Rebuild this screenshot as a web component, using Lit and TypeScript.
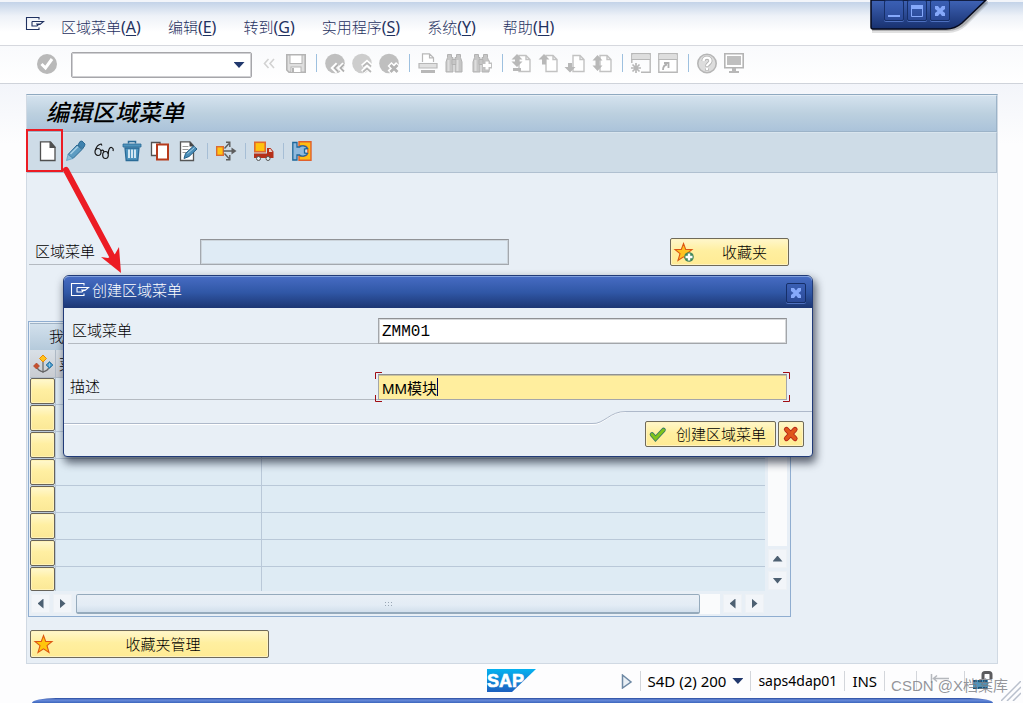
import { LitElement, html, css, svg, nothing, TemplateResult, SVGTemplateResult } from "lit";
import { customElement, property } from "lit/decorators.js";

const page = (x: number) => svg`<path d="M${x} 2.5h7l4 4v12h-11z M${x + 7} 2.5v4h4" />`;
const star = (fill: string, stroke: string) =>
  svg`<path d="M9.500 1.500l2.200 6h6.300l-5 4.200 2 6.800-5.500-3.700L4 18.500l2-6.800L1 7.500h6.300z" fill=${fill} stroke=${stroke} stroke-width="1.100" />`;

const ICONS: Record<string, SVGTemplateResult> = {
  exit: svg`<path d="M13 3.500V1.500H.500v12H13v-2M6 5.500h11.500L14 8.500h-3M6 5.500v4.500h5l2-2H10" fill="none" stroke="currentColor" stroke-width="1.100"/>`,
  check: svg`<circle cx="10" cy="11" r="10" fill="#b9b9b9"/><path d="M4.500 11l4 4 6.500-9" fill="none" stroke="#fff" stroke-width="3"/>`,
  collapse: svg`<path d="M9.500 6L5.500 10.500l4 4.500M15 6l-4 4.500 4 4.500" fill="none" stroke="#d2d2d2" stroke-width="1.600"/>`,
  save: svg`<path d="M.800 1.800h18.400v17.400H3L.800 17z" fill="#dedede" stroke="#b4b4b4" stroke-width="1.600"/><rect x="4" y="2" width="12" height="8.500" fill="#fff" stroke="#b4b4b4"/><rect x="5" y="14" width="10" height="5.500" fill="#fff" stroke="#b4b4b4"/><path d="M7 15v4" stroke="#b4b4b4" stroke-width="2"/>`,
  back: svg`<circle cx="10" cy="10.500" r="9.800" fill="#bfbfbf"/><path d="M12.500 11l-4 4 4 4M19 11l-4 4 4 4" fill="none" stroke="#fff" stroke-width="4.500"/><path d="M13 11.500l-3.500 3.500 3.500 3.500M19 11.500l-3.500 3.500 3.500 3.500" fill="none" stroke="#b0b0b0" stroke-width="1.800"/>`,
  up: svg`<circle cx="10" cy="10.500" r="9.800" fill="#cdcdcd"/><path d="M10.500 13.500l4.500-4 4.500 4M10.500 19l4.500-4 4.500 4" fill="none" stroke="#fff" stroke-width="4.500"/><path d="M11 13.500l4-3.500 4 3.500M11 19l4-3.500 4 3.500" fill="none" stroke="#b8b8b8" stroke-width="1.800"/>`,
  cancel: svg`<circle cx="10" cy="10.500" r="9.800" fill="#bfbfbf"/><path d="M10.500 11l8.500 8.500M19 11l-8.500 8.500" stroke="#fff" stroke-width="5.500"/><path d="M11.500 12l7 7M18.500 12l-7 7" stroke="#b4b4b4" stroke-width="2.800"/>`,
  print: svg`<path d="M4.500 9V.800h7l4 4V9M11.500.800v4h4" fill="#fff" stroke="#b8b8b8" stroke-width="1.200"/><path d="M1 10.500h18v4.500H1z" fill="#e0e0e0" stroke="#b8b8b8" stroke-width="1.200"/><path d="M3 17h14v3H3z" fill="#b8b8b8"/>`,
  find: svg`<g fill="#c6c6c6" stroke="#b2b2b2"><path d="M2.500 1.500h4v3h1.500v14.500h-7V9l1.500-4.500zM11.500 1.500h4v3L17 9v10h-7V4.500h1.500z"/><path d="M7 6.500h4v5H7z"/></g><path d="M3.500 7v11M12.500 7v11" stroke="#dedede" stroke-width="2"/>`,
  findNext: svg`<g fill="#c6c6c6" stroke="#b2b2b2"><path d="M2.500 1.500h4v3h1.500v14.500h-7V9l1.500-4.500zM11.500 1.500h4v3L17 9v10h-7V4.500h1.500z"/><path d="M7 6.500h4v5H7z"/></g><path d="M3.500 7v11" stroke="#dedede" stroke-width="2"/><path d="M15 7.500v10M10 12.500h10" stroke="#c0c0c0" stroke-width="6"/><path d="M15 8.500v8M11 12.500h8" stroke="#fff" stroke-width="3"/>`,
  firstPage: svg`<g fill="#fff" stroke="#c2c2c2" stroke-width="1.400">${page(8)}</g><path d="M6 1l5.500 5.500H8v2h3.500L6 14 .500 8.500H4v-2H.500z" fill="#b8b8b8"/><path d="M2 15h8v3H2z" fill="#b8b8b8"/>`,
  prevPage: svg`<g fill="#fff" stroke="#c2c2c2" stroke-width="1.400">${page(8)}</g><path d="M6 1l5.500 5.500H8v5H4v-5H.500z" fill="#b8b8b8"/>`,
  nextPage: svg`<g fill="#fff" stroke="#c2c2c2" stroke-width="1.400">${page(8)}</g><path d="M3 10h4v4h3.500L5 19.500-.500 14H3z" fill="#b8b8b8"/>`,
  lastPage: svg`<g fill="#fff" stroke="#c2c2c2" stroke-width="1.400">${page(8)}</g><path d="M5.500 2l5 5.500H7.500v5h3l-5 5.500-5-5.500h3v-5h-3z" fill="#b8b8b8"/>`,
  session: svg`<path d="M.800 10V.800h18.400v18.400H10" fill="none" stroke="#b8b8b8" stroke-width="1.400"/><path d="M1.500 1.500h17V6h-17z" fill="#dedede"/><path d="M0 6.500h19" stroke="#b8b8b8"/><path d="M5 10v10M0 15h10M1.500 11.500l7 7M8.500 11.500l-7 7" stroke="#b8b8b8" stroke-width="1.700"/>`,
  shortcut: svg`<path d="M.800.800h18.400v18.400H.800z" fill="#fff" stroke="#b8b8b8" stroke-width="1.400"/><path d="M1.500 1.500h17V6h-17z" fill="#dedede"/><path d="M0 6.500h19" stroke="#b8b8b8"/><path d="M5 17c0-4 1.500-5 4-5.500M6 10h4.500v5" fill="none" stroke="#b0b0b0" stroke-width="1.800"/>`,
  help: svg`<circle cx="10" cy="10.500" r="9.200" fill="#ddd" stroke="#b6b6b6" stroke-width="1.600"/><path d="M6.500 8c0-4.500 7-4.500 7 0 0 2.600-3.500 2.600-3.500 5.500M10 15.500v2" fill="none" stroke="#b0b0b0" stroke-width="4"/><path d="M6.500 8c0-4.500 7-4.500 7 0 0 2.600-3.500 2.600-3.500 5M10 15v2" fill="none" stroke="#fff" stroke-width="2.400"/>`,
  monitor: svg`<path d="M.800.800h18.400v14H.800z" fill="#fff" stroke="#b4b4b4" stroke-width="1.600"/><path d="M3 3h14v9H3z" fill="#bfbfbf"/><path d="M8 15h4v3h3v2H5v-2h3z" fill="#b8b8b8"/>`,
  create: svg`<path d="M2.500.800h9.500l5 5.500v13.200h-14.500z" fill="#fff" stroke="#4f4f4f" stroke-width="1.300"/><path d="M11.500.500h1.500l4.500 5.500v1h-6z" fill="#4f4f4f"/>`,
  pencil: svg`<path d="M2 13.500L11 4l5 4.500-9 9z" fill="#5d9cc2" stroke="#2c6a93"/><path d="M12 4l2-3.500 2-.500 3 3-.500 2-2 3z" fill="#3f82ae" stroke="#2c6a93"/><path d="M4.500 13L12 5.500" stroke="#a8d0e6" stroke-width="1.600"/><path d="M.500 19.500L2 13.500l5 4z" fill="#8ebfd9" stroke="#4b8fb9" stroke-width=".600"/>`,
  glasses: svg`<g fill="none" stroke="#161616" stroke-width="1.200"><ellipse cx="4" cy="11" rx="3" ry="3.500"/><ellipse cx="11.500" cy="14" rx="2.800" ry="3.500"/><path d="M7 10c1-1.500 2.500-1 3 .800M1.500 9c1-4 3-5.500 5.500-6l1 1.500M14.200 13c0-4 1.500-7 3.300-6.500 1.800.500 2 2 1.500 3.500"/></g>`,
  trash: svg`<path d="M3 7h14l-1.200 12.500H4.200z" fill="#4d93bd" stroke="#2a6b97" stroke-width="1.300"/><path d="M1 3h18v3H1z" fill="#4f93bb" stroke="#2a6b97" stroke-width=".800"/><path d="M6.500 2.500v-2h7v2" fill="none" stroke="#2a6b97" stroke-width="1.500"/><path d="M7 8.500v8.500M10 8.500v8.500M13 8.500v8.500" stroke="#eaf6fc" stroke-width="1.700"/>`,
  copy: svg`<path d="M10 3V1.500H1.500v13H6" fill="#fff" stroke="#525252" stroke-width="1.300"/><rect x="7" y="3.500" width="11" height="15" fill="#fff" stroke="#b63a1b" stroke-width="2"/>`,
  change: svg`<path d="M2.500.800h9.500l3.500 4v14.700h-13z" fill="#fff" stroke="#565656" stroke-width="1.300"/><path d="M11.500 .500l4.500 5h-4.500z" fill="#444"/><path d="M4.500 5.500h6M4.500 8.500h6M4.500 11.500h4" stroke="#999"/><path d="M6 17.500l1.500-5 8-7.500 3.500 3-8 7.500z" fill="#4b8fb9" stroke="#225f88"/><path d="M9.500 12.500l7-6" stroke="#a8d0e6"/>`,
  where: svg`<rect x=".700" y="5.700" width="6.600" height="8.600" fill="#ffc414" stroke="#dc6a30" stroke-width="1.400"/><g fill="none" stroke="#5d5d5d" stroke-width="1.400"><path d="M7.500 10h9M8.500 7.500L13 2.500M8.500 12.500l4.500 5M10 1.200h3.800V6M10 18.800h3.800V14"/></g><path d="M15.500 6.500L20.500 10l-5 3.500z" fill="#5d5d5d"/>`,
  transport: svg`<rect x=".800" y="1.300" width="10.400" height="9.400" fill="#ffc20e" stroke="#e0692c" stroke-width="1.600"/><path d="M13 7h3.500l3 3.500V17H0v-4.500h13z" fill="#b5301a"/><path d="M15 8h1.500l2 3H15z" fill="#e8d0c8"/><circle cx="4.500" cy="17.500" r="2" fill="#e8eef2" stroke="#555"/><circle cx="14" cy="17.500" r="2" fill="#e8eef2" stroke="#555"/>`,
  where2: svg`<path d="M7 .800h12v18.400H7V15h5q4 0 4-5t-4-5H7z" fill="#ffbe12" stroke="#e0602c" stroke-width="1.400"/><path d="M.800 1.500H5v4.500h2.500c1.500-2 6.500-1.500 8 1.500l-3 .500v4l3 .500c-1.500 3-6.500 3.500-8 1.500H5v5H.800z" fill="#8fb9dc" stroke="#1d679a" stroke-width="1.300"/>`,
  starAdd: svg`${star("#ffc222", "#dd5713")}<circle cx="15" cy="15" r="4.800" fill="#42865b"/><path d="M15 11.500v7M11.500 15h7" stroke="#fff" stroke-width="2.400"/>`,
  star: star("#ffc60b", "#dd5713"),
  ok: svg`<path d="M3 10.500l3.500 4L14.500 6" fill="none" stroke="#34766a" stroke-width="4.600" stroke-linecap="round"/><path d="M3 10.500l3.500 4L14.500 6" fill="none" stroke="#7fc31c" stroke-width="3" stroke-linecap="round"/>`,
  no: svg`<path d="M4.500 5.500l8.500 9M13 5.500l-8.500 9" stroke="#b3261a" stroke-width="5.200" stroke-linecap="round"/><path d="M4.500 5.500l8.500 9M13 5.500l-8.500 9" stroke="#e0561b" stroke-width="3.400" stroke-linecap="round"/>`,
  config: svg`<path d="M10 7v12M4.500 14c.500 2 2 3 5.500 4 3.500-1 5-2 5.500-4" fill="none" stroke="#666" stroke-width="1.200"/><path d="M10 1l3.500 3.500L10 8 6.500 4.500z" fill="#ffc31e" stroke="#ec8a00"/><path d="M3.500 9l3 3-3 3-3-3z" fill="#c6502e" stroke="#a83a20" stroke-width=".600"/><path d="M16.500 7.500l3.500 3.500-3.500 3.500L13 11z" fill="#2d84b8" stroke="#1c6698" stroke-width=".600"/><path d="M14.500 11h4M16.500 9v4" stroke="#8cc4e4"/>`,
};

@customElement("sap-icon")
export class SapIcon extends LitElement {
  @property() name = "";
  static styles = css`
    :host { display: inline-flex; flex: none; width: 20px; height: 20px; }
    svg { display: block; overflow: visible; }
  `;
  render() {
    return html`<svg width="20" height="20" viewBox="0 0 20 20" aria-hidden="true">${ICONS[this.name] ?? nothing}</svg>`;
  }
}

const MENUS = [
  ["区域菜单", "A"], ["编辑", "E"], ["转到", "G"], ["实用程序", "S"], ["系统", "Y"], ["帮助", "H"],
];

const SYSTEM_TOOLS: [string, string][] = [
  ["collapse", "收起"], ["save", "保存"], ["|", ""],
  ["back", "返回"], ["up", "退出"], ["cancel", "取消"], ["|", ""],
  ["print", "打印"], ["find", "查找"], ["findNext", "继续查找"], ["|", ""],
  ["firstPage", "首页"], ["prevPage", "上一页"], ["nextPage", "下一页"], ["lastPage", "末页"], ["|", ""],
  ["session", "新建会话"], ["shortcut", "创建快捷方式"], ["|", ""],
  ["help", "帮助"], ["monitor", "布局"],
];

const APP_TOOLS: [string, string][] = [
  ["create", "创建"], ["pencil", "更改"], ["glasses", "显示"], ["trash", "删除"], ["copy", "复制"], ["change", "编辑"], ["|", ""],
  ["where", "使用位置"], ["|", ""], ["transport", "传输"], ["|", ""], ["where2", "转换"],
];

@customElement("app-root")
export class AppRoot extends LitElement {
  static styles = css`
    :host {
      display: block;
      --ui: "Noto Sans", "Noto Sans CJK SC", sans-serif;
      --cjk: "Noto Sans CJK SC", sans-serif;
      font: 300 15px/20px var(--cjk);
      color: #000;
    }
    * { box-sizing: border-box; }
    button, input { font: inherit; color: inherit; margin: 0; padding: 0; border: 0; background: none; outline: none; border-radius: 0; }
    button { cursor: pointer; }
    .window {
      position: relative; overflow: hidden; min-height: 100vh;
      display: flex; flex-direction: column;
      background: #fdfdfe; box-shadow: inset 1px 0 0 #e9ebf0;
    }
    .menubar {
      display: flex; align-items: center; gap: 27px;
      height: 46px; padding: 7px 24px 0;
      border-top: 2px solid #f2f5fa; border-bottom: 1px solid #d6d8de;
      background: linear-gradient(#c3d3e8, #eef2f8 14px, #fff 30px);
      color: #1f3160;
    }
    .menubar .exit { display: flex; padding: 0 0 0 2px; margin: -2px -12px 0 0; height: 20px; }
    .menu { white-space: nowrap; }
    .latin { font: 400 16px/20px var(--ui); }
    .latin u { text-underline-offset: 2px; text-decoration-thickness: 1px; }

    .systools {
      display: flex; align-items: flex-start; gap: 7px;
      padding: 6px 37px 5px; border-bottom: 1px solid #cfd3da;
      background: linear-gradient(#f9fafc, #fff);
    }
    .tool { display: flex; flex: none; width: 20px; height: 20px; margin-top: 1px; }
    .combo {
      display: flex; width: 181px; height: 26px; margin-left: 7px;
      border: 1px solid #a6a6aa; border-radius: 2px; background: #fff; box-shadow: inset 0 0 0 1px #d0d0d3;
    }
    .combo input { flex: 1; min-width: 0; padding: 0 4px; }
    .combo button { width: 24px; display: grid; place-items: center; }
    .tri { width: 11px; height: 6px; background: #21386d; clip-path: polygon(0 0, 100% 0, 50% 100%); }
    .sep { flex: none; width: 1px; height: 18px; margin: 2px 1px 0 3px; background: #9dc0df; }

    .backdrop { background: linear-gradient(#f3f5fa, #fdfdfe 60px); flex: 1; display: flex; flex-direction: column; }
    .panel {
      flex: 1; margin: 10px 25px 0 26px; display: flex; flex-direction: column;
      border: 1px solid #d0d9e3; border-top: 1px solid #8fa9c0; background: #e8eff6;
    }
    h1 {
      margin: 0; padding: 0 19px; height: 37px; font: italic 500 23px/31px var(--cjk);
      background: linear-gradient(#d4e2ee, #bcd0df 50%, #abc3da);
      border: 1px solid #9cb3c8; border-width: 1px 1px 1px 0; border-top-color: #e6eef5;
    }
    .apptools {
      display: flex; gap: 8px; padding: 7px 11px 11px;
      border: 1px solid #b0c0d0; border-width: 1px 1px 1px 0; border-top-color: #d9e5ee; background: #cedce7;
    }
    .apptools .sep { height: 16px; margin: 3px 0 0 1px; background: #a6bed5; }
    .body { flex: 1; padding: 65px 3px 5px 2px; }

    .search { display: flex; align-items: flex-start; }
    .fieldlabel { border-bottom: 1px solid #b4bac1; white-space: nowrap; }
    .search .fieldlabel { width: 171px; height: 27px; padding: 3px 6px 0; }
    .search input {
      width: 309px; height: 26px; margin-top: 1px; padding: 0 4px;
      border: 1px solid #a3a8ae; border-top-color: #909296; background: #dfebf5; box-shadow: inset 0 0 0 1px #ccd4db;
    }
    .btn {
      display: flex; align-items: center; height: 28px; padding: 0 4px;
      border: 1px solid #6f6a5a; border-radius: 2px;
      background: linear-gradient(#fff7cb, #ffefa0 45%, #ffeb94); box-shadow: inset 0 0 0 1px #fff3c0;
    }
    .btn .text { flex: 1; text-align: center; white-space: nowrap; }
    .fav { width: 119px; margin-left: 161px; padding-left: 3px; }
    .fav .text { text-align: right; padding-right: 17px; }
    .favadmin { width: 239px; margin: 13px 1px 0; padding-left: 3px; }
    .favadmin .text { padding-left: 8px; }

    .list {
      width: min(100%, 763px); margin: 55px 0 0 -1px; padding: 1px;
      border: 1px solid #8fadd0; display: grid; grid-template-columns: 1fr 24px;
    }
    .caption {
      grid-column: 1 / -1; height: 27px; padding: 2px 19px 0;
      border-top: 1px solid #9fb3c6; background: linear-gradient(#d2e0ec, #b5cadb);
    }
    table { width: 100%; border-collapse: separate; border-spacing: 0; table-layout: fixed; background: #deebf4; }
    th { height: 28px; padding: 0 0 0 3px; text-align: left; font-weight: inherit; background: linear-gradient(#d9e0e7, #c9ccd1); border-bottom: 1px solid #b1bcc8; border-right: 1px solid #b1bcc8; }
    th sap-icon { display: flex; }
    td { height: 27px; padding: 0; border-bottom: 1px solid #b9c8d8; border-right: 1px solid #b9c8d8; }
    th:last-child, td:last-child { border-right: 0; }
    tr:last-child td { height: 24px; border-bottom: 0; }
    .selcol { width: 26px; }
    .namecol { width: 206px; }
    .rowsel {
      display: block; width: 25px; height: 26px; border: 1px solid #67635a; border-radius: 2px;
      background: linear-gradient(#fff8cf, #ffefa2 45%, #fbe896); box-shadow: inset 0 0 0 1px #fff3b8;
    }
    tr:last-child .rowsel { height: 24px; }
    .vscroll { display: flex; flex-direction: column; gap: 3px; padding: 0 2px 1px 3px; }
    .track { flex: 1; background: #fafbfc; }
    .arrow { flex: none; width: 19px; height: 19px; display: grid; place-items: center; background: #f2f5f9; border: 1px solid #edf1f5; }
    .arrow i { width: 10px; height: 6px; background: #4d6072; }
    .arrow.u i { clip-path: polygon(50% 0, 100% 100%, 0 100%); }
    .arrow.d i { clip-path: polygon(0 0, 100% 0, 50% 100%); }
    .arrow.l i { width: 6px; height: 10px; clip-path: polygon(100% 0, 100% 100%, 0 50%); }
    .arrow.r i { width: 6px; height: 10px; clip-path: polygon(0 0, 100% 50%, 0 100%); }
    .hscroll { display: flex; gap: 3px; padding: 3px 1px 1px; }
    .htrack { flex: 1; display: flex; margin-left: 1px; background: #fafbfc; }
    .thumb {
      width: 624px; max-width: 97%; height: 20px; border: 1px solid #95aabc; border-bottom-width: 2px; border-radius: 2px;
      background: linear-gradient(#e9eff6, #e3ecf5 60%, #d2dfec); display: grid; place-items: center;
    }
    .grip { width: 9px; height: 6px; background: radial-gradient(circle, #9aa7b5 1px, transparent 1px) 0 0 / 3px 3px; }

    .status {
      display: grid; grid-template-columns: 1fr auto 1fr; height: 34px; align-items: center;
      font: 400 15px/20px var(--ui);
    }
    .status .logo { display: block; }
    .right { display: flex; align-items: center; gap: 7px; padding-left: 84px; white-space: nowrap; }
    .right .bar { flex: none; width: 1px; height: 20px; background: #d3d6db; }
    .server { font-size: 14px; }
    .sys { display: flex; align-items: center; gap: 6px; }
    .right .wide { margin-left: 24px; }
    .right .tail { margin-left: 5px; }
    .edge { height: 5px; margin: 0 30px 0 32px; border-radius: 24px 24px 0 0 / 5px 5px 0 0; background: linear-gradient(#27499c, #6a8cdb 40%, #3c66bd); }

    .chrome { position: absolute; top: 0; right: 29px; width: 124px; height: 36px; }
    .chrome svg { display: block; }
    .chrome .btns { position: absolute; top: 0; left: 14px; display: flex; gap: 3px; }
    .winbtn {
      width: 20px; height: 21px; display: grid; place-items: center;
      border: 1px solid #162f69; border-radius: 2px; background: linear-gradient(#3a5fb4, #2b4a98); box-shadow: 0 1px 0 #4e70bf;
    }

    .dialog {
      position: absolute; left: 63px; top: 275px; width: 750px;
      border: 1px solid #213b78; border-radius: 6px 6px 4px 4px; background: #e8eff6;
      box-shadow: 2px 5px 9px 1px rgba(20, 28, 45, .65);
    }
    .dlgtitle {
      display: flex; align-items: center; gap: 1px; height: 32px; padding: 0 6px 6px 7px;
      border-top: 1px solid #7f9fdd; border-radius: 5px 5px 0 0;
      background: linear-gradient(#466bc2, #3057a6 50%, #1c3673); color: #fff;
    }
    .dlgtitle sap-icon { height: 15px; }
    .dlgtitle h2 { flex: 1; margin: 0; font: inherit; }
    .dlgtitle .winbtn { margin-top: 6px; height: 20px; }
    .dlgform { display: grid; gap: 30px; padding: 10px 25px 10px 4px; }
    .dlgrow { display: grid; grid-template-columns: 310px 1fr; }
    .dlgrow .fieldlabel { padding: 2px 4px 0; }
    .dlgrow:last-child .fieldlabel { padding-left: 2px; }
    .dlgrow input { width: 100%; height: 26px; padding: 0 3px; border: 1px solid #a3a6aa; border-top-color: #8f9194; background: #fff; box-shadow: inset 0 0 0 1px #d6d8da; }
    .dlgrow .code { padding-top: 2px; font: 400 16px/20px "Liberation Mono", monospace; }
    .focus { position: relative; }
    .dlgrow .focus input { background: #ffee9e; box-shadow: inset 0 1px 0 #c9c29a; font-family: "Liberation Sans", "Noto Sans CJK SC", sans-serif; font-weight: 400; }
    .caret { position: absolute; left: 59px; top: 4px; width: 1px; height: 18px; background: #00005a; }
    .focus svg { position: absolute; left: -3px; top: -2px; width: calc(100% + 6px); height: 30px; pointer-events: none; }
    .dlgfoot { position: relative; display: flex; justify-content: flex-end; gap: 2px; padding: 11px 8px 9px; }
    .curve { position: absolute; inset: 0 0 auto 0; display: flex; height: 16px; pointer-events: none; }
    .curve .low { flex: 1; border-bottom: 1px solid #aeb9ca; height: 14px; box-shadow: 0 1px 0 #fff; }
    .curve .high { width: 186px; border-top: 1px solid #aeb9ca; margin-top: 1px; }
    .curve svg { flex: none; }
    .dlgfoot .btn { position: relative; height: 26px; }
    .dlgfoot .confirm { width: 131px; padding: 0 2px 0 3px; }
    .dlgfoot .abort { width: 26px; padding: 0 3px; }

    .marks { position: absolute; left: 24px; top: 127px; pointer-events: none; }
    .watermark { position: absolute; right: 15px; bottom: 7px; font: 400 15px/20px "Liberation Sans", "Noto Sans CJK SC", sans-serif; color: rgba(120, 122, 128, .8); white-space: nowrap; }
    .resize { position: absolute; right: 2px; bottom: 2px; }
  `;

  private tool([name, title]: [string, string]): TemplateResult {
    return name === "|"
      ? html`<span class="sep"></span>`
      : html`<button class="tool" aria-label=${title}><sap-icon name=${name}></sap-icon></button>`;
  }

  private arrow(dir: string, label: string): TemplateResult {
    return html`<button class="arrow ${dir}" aria-label=${label}><i></i></button>`;
  }

  private closeGlyph() {
    return html`<svg width="12" height="12" viewBox="0 0 12 12"><path d="M1 1h3l2 2.500L8 1h3v3L8.500 6 11 8v3H8L6 8.500 4 11H1V8l2.500-2L1 4z" fill="#86a9fb"/></svg>`;
  }

  render() {
    return html`
      <div class="window">
        <nav class="menubar">
          <button class="exit" aria-label="系统菜单"><sap-icon name="exit"></sap-icon></button>
          ${MENUS.map(([t, k]) => html`<button class="menu">${t}<span class="latin">(<u>${k}</u>)</span></button>`)}
        </nav>
        <div class="systools">
          <button class="tool" aria-label="回车"><sap-icon name="check"></sap-icon></button>
          <div class="combo">
            <input type="text" aria-label="命令字段" />
            <button aria-label="历史记录"><span class="tri"></span></button>
          </div>
          ${SYSTEM_TOOLS.map((t) => this.tool(t))}
        </div>
        <div class="backdrop">
          <main class="panel">
            <h1>编辑区域菜单</h1>
            <div class="apptools">${APP_TOOLS.map((t) => this.tool(t))}</div>
            <div class="body">
              <div class="search">
                <label class="fieldlabel" for="area">区域菜单</label>
                <input id="area" type="text" />
                <button class="btn fav"><sap-icon name="starAdd"></sap-icon><span class="text">收藏夹</span></button>
              </div>
              <section class="list">
                <div class="caption">我</div>
                <table>
                  <colgroup><col class="selcol" /><col class="namecol" /><col /></colgroup>
                  <thead><tr><th><sap-icon name="config"></sap-icon></th><th>菜</th><th></th></tr></thead>
                  <tbody>
                    ${Array.from({ length: 8 }, (_, i) => html`<tr><td><button class="rowsel" aria-label="选择行 ${i + 1}"></button></td><td></td><td></td></tr>`)}
                  </tbody>
                </table>
                <div class="vscroll"><div class="track"></div>${this.arrow("u", "向上")}${this.arrow("d", "向下")}</div>
                <div class="hscroll">
                  ${this.arrow("l", "向左")}${this.arrow("r", "向右")}
                  <div class="htrack"><div class="thumb"><span class="grip"></span></div></div>
                  ${this.arrow("l", "向左")}${this.arrow("r", "向右")}
                </div>
              </section>
              <button class="btn favadmin"><sap-icon name="star"></sap-icon><span class="text">收藏夹管理</span></button>
            </div>
          </main>
          <footer class="status">
            <span></span>
            <svg class="logo" width="50" height="24" viewBox="0 0 50 24" role="img">
              <defs><linearGradient id="sap" x2="0" y2="1"><stop stop-color="#05b2f0"/><stop offset="1" stop-color="#1c5fbf"/></linearGradient></defs>
              <path d="M0 0h49L25 23H0z" fill="url(#sap)"/>
              <text x="0" y="18" font-family="Liberation Sans, sans-serif" font-weight="700" font-size="18" fill="#fff" stroke="#fff" stroke-width=".600">SAP</text>
            </svg>
            <div class="right">
              <svg width="12" height="15" viewBox="0 0 12 15"><path d="M1.500 1l8.500 7-8.500 6z" fill="#e9eff5" stroke="#6e89a4" stroke-width="1.500"/></svg>
              <span class="bar"></span>
              <button class="sys">S4D (2) 200 <span class="tri"></span></button>
              <span class="bar"></span>
              <span class="server">saps4dap01</span>
              <span class="bar"></span>
              <span>INS</span>
              <span class="bar"></span>
              <span class="bar wide"></span>
              <svg width="28" height="15" viewBox="0 0 28 15"><path d="M7.500 0v9M9 4.500h16M13 1.500L9.500 4.500l3.500 3" fill="none" stroke="#b5b8bd" stroke-width="1.500"/></svg>
              <span class="bar tail"></span>
              <svg width="22" height="20" viewBox="0 0 22 20"><path d="M11 8V3.500q0-2 2-2h4q2 0 2 2V8" fill="none" stroke="#5b5b5e" stroke-width="3"/><path d="M1 9h15v9H1z" fill="#4f93ba"/><path d="M1 10h15M1 17h15" stroke="#17537c" stroke-width="2" stroke-dasharray="4 1"/></svg>
            </div>
          </footer>
          <div class="edge"></div>
        </div>

        <div class="chrome">
          <svg width="124" height="36" viewBox="0 0 124 36">
            <defs><linearGradient id="cap" x2="0" y2="1"><stop stop-color="#3f63b6"/><stop offset="1" stop-color="#17306e"/></linearGradient></defs>
            <path d="M2 0v30h76q10 0 18-7L118 1V0z" fill="#000" opacity=".120" transform="translate(0 3)"/>
            <path d="M2 0v30h76q10 0 18-7L118 1V0z" fill="#000" opacity=".200" transform="translate(0 1)"/>
            <path d="M1 0v27q0 2 2 2h73q9 0 16-6L116 0z" fill="url(#cap)" stroke="#05091c" stroke-width="1.500"/>
          </svg>
          <div class="btns">
            <button class="winbtn" aria-label="最小化"><svg width="12" height="12"><path d="M0 10h12v2H0z" fill="#86a9fb"/></svg></button>
            <button class="winbtn" aria-label="最大化"><svg width="12" height="12"><path d="M.500.500h11v11H.500z" fill="none" stroke="#86a9fb"/><path d="M0 0h12v4H0z" fill="#86a9fb"/></svg></button>
            <button class="winbtn" aria-label="关闭">${this.closeGlyph()}</button>
          </div>
        </div>

        <section class="dialog" role="dialog" aria-labelledby="dlg">
          <header class="dlgtitle">
            <sap-icon name="exit"></sap-icon>
            <h2 id="dlg">创建区域菜单</h2>
            <button class="winbtn" aria-label="关闭">${this.closeGlyph()}</button>
          </header>
          <div class="dlgform">
            <div class="dlgrow">
              <label class="fieldlabel" for="code">区域菜单</label>
              <input class="code" id="code" type="text" value="ZMM01" />
            </div>
            <div class="dlgrow">
              <label class="fieldlabel" for="desc">描述</label>
              <div class="focus">
                <input id="desc" type="text" value="MM模块" />
                <span class="caret"></span>
                <svg><g fill="none" stroke="#a00c12"><path d="M7 .500H.500V7M.500 23v6.500H7"/></g>
                  <svg x="100%" overflow="visible"><path d="M-7 .500H-.500V7M-.500 23v6.500H-7" fill="none" stroke="#a00c12"/></svg></svg>
              </div>
            </div>
          </div>
          <footer class="dlgfoot">
            <div class="curve">
              <span class="low"></span>
              <svg width="34" height="16" viewBox="0 0 34 16"><path d="M0 14.500c12 1 18-13 34-12.500" fill="none" stroke="#fff"/><path d="M0 13.500c12 1 18-12.500 34-12" fill="none" stroke="#aeb9ca"/></svg>
              <span class="high"></span>
            </div>
            <button class="btn confirm"><sap-icon name="ok"></sap-icon><span class="text">创建区域菜单</span></button>
            <button class="btn abort" aria-label="取消"><sap-icon name="no"></sap-icon></button>
          </footer>
        </section>

        <svg class="marks" width="104" height="150" viewBox="0 0 104 150">
          <rect x="3" y="3" width="35" height="41" fill="none" stroke="#ec1c24" stroke-width="2"/>
          <path d="M42 43L88 129" stroke="#ec1c24" stroke-width="6" stroke-linecap="round"/>
          <path d="M77 130L97 146L95 120L91 127L84 131z" fill="#ec1c24"/>
        </svg>
        <svg class="resize" width="20" height="20" viewBox="0 0 20 20"><path d="M0 20L20 0M6 20L20 6M12 20l8-8" stroke="#b9c0cc" stroke-width="1.500"/></svg>
        <div class="watermark">CSDN @X档案库</div>
      </div>
    `;
  }
}
